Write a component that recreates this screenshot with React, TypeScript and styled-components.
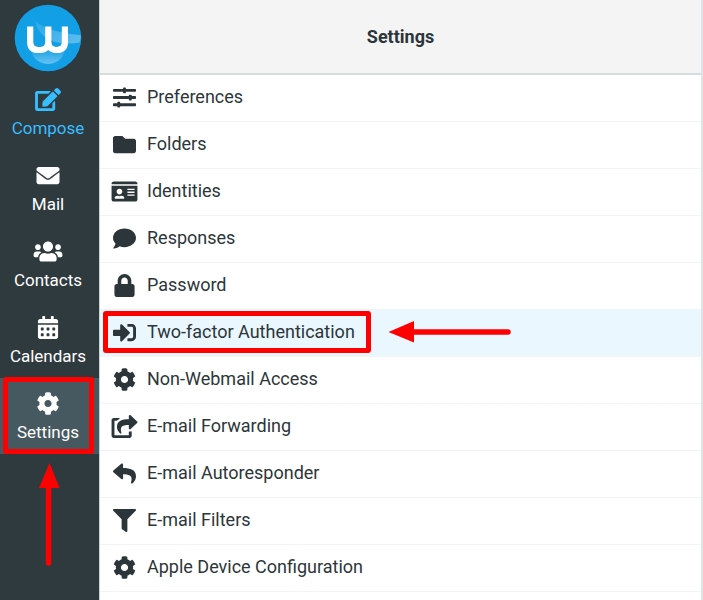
import React from "react";
import styled, { createGlobalStyle, css } from "styled-components";
import type { IconType } from "react-icons";
import {
  FaCalendarAlt,
  FaCog,
  FaComment,
  FaEdit,
  FaEnvelope,
  FaFilter,
  FaFolder,
  FaIdCard,
  FaLock,
  FaReply,
  FaShareSquare,
  FaSignInAlt,
  FaSlidersH,
  FaUsers,
} from "react-icons/fa";

const GlobalStyle = createGlobalStyle`
  *, *::before, *::after { box-sizing: border-box; }
  body {
    margin: 0;
    overflow: hidden;
    background: #fff;
    color: #2c363a;
    font-family: Roboto, "Liberation Sans", sans-serif;
    font-size: 18px;
  }
`;

const Page = styled.div`
  display: flex;
  min-height: 100vh;
`;

const Sidebar = styled.aside`
  flex: none;
  width: 100px;
  background: #2f3a3f;
  border-right: 1px solid #c9d2d6;
`;

const Brand = styled.div`
  display: flex;
  justify-content: center;
  height: 74px;
  padding: 4px 3px 0 0;
`;

const TaskMenu = styled.nav`
  display: flex;
  flex-direction: column;
`;

const TaskButton = styled.button<{ $accent?: boolean; $active?: boolean }>`
  position: relative;
  display: flex;
  flex-direction: column;
  align-items: center;
  gap: 7px;
  height: 76px;
  padding: 14px 3px 0 0;
  border: 0;
  background: ${(p) => (p.$active ? "#475960" : "transparent")};
  color: ${(p) => (p.$accent ? "#37beff" : "#fff")};
  font: inherit;
  font-size: 17px;
  line-height: 20px;
  cursor: pointer;

  > svg:first-child {
    flex: none;
    width: 30px;
    height: 23px;
  }
`;

const Main = styled.main`
  flex: 1;
  min-width: 0;
  border-right: 2px solid #dfe4e7;
`;

const Header = styled.header`
  display: flex;
  align-items: center;
  justify-content: center;
  height: 75px;
  background: #f4f4f4;
  border-bottom: 2px solid #d6dde0;
`;

const Title = styled.h1`
  margin: 0;
  font-size: 18px;
  line-height: 24px;
  font-weight: 700;
`;

const OptionList = styled.ul`
  margin: 0;
  padding: 0;
  list-style: none;
`;

const OptionRow = styled.li<{ $hover?: boolean }>`
  position: relative;
  display: flex;
  height: 47px;
  border-bottom: 1px solid #f1f3f4;
  background: ${(p) => (p.$hover ? "#eaf7fe" : "#fff")};
`;

const OptionLink = styled.a`
  flex: 1;
  display: flex;
  align-items: center;
  padding: 0 0 2px 11px;
  color: inherit;
  line-height: 24px;
  text-decoration: none;
`;

const OptionContent = styled.span`
  position: relative;
  display: flex;
  align-items: center;
  gap: 9px;

  svg {
    flex: none;
    width: 27px;
    height: 23px;
  }
`;

const marker = css`
  position: absolute;
  border: 5px solid #f00;
  border-radius: 3px;
  pointer-events: none;
`;

const TaskMarker = styled.span`
  ${marker}
  inset: -1px 5px 0 3px;
`;

const OptionMarker = styled.span`
  ${marker}
  inset: -9px -16px -9px -8px;
`;

const UpArrow = styled.svg`
  position: absolute;
  top: 85px;
  left: 38px;
  pointer-events: none;
`;

const LeftArrow = styled.svg`
  position: absolute;
  top: 11px;
  left: 288px;
  pointer-events: none;
`;

const Logo = () => (
  <svg width="68" height="68" viewBox="0 0 68 68" role="img" aria-label="Webmail">
    <defs>
      <linearGradient id="shine" x1="0" y1="0" x2="1" y2="1">
        <stop offset="0" stopColor="#fff" stopOpacity="0.1" />
        <stop offset="1" stopColor="#fff" stopOpacity="0.32" />
      </linearGradient>
      <linearGradient id="pool" x1="0" y1="0" x2="0" y2="1">
        <stop offset="0" stopColor="#fff" stopOpacity="0.05" />
        <stop offset="1" stopColor="#fff" stopOpacity="0.36" />
      </linearGradient>
    </defs>
    <circle cx="34" cy="34" r="33.3" fill="#129fe6" />
    <path d="M21 17C30 25 50 30 66.800 31c0 3-.4 5-1.300 7.500C45 42 25 36 21 17Z" fill="url(#shine)" />
    <path d="M17 46h34c-2 9-9 14-17 14s-15-5-17-14Z" fill="url(#pool)" />
    <path
      d="M16.200 22.500v15.500c0 5.500 3 8 8 8h2c5 0 8.100-3 8.100-8V22.500M34.300 38c0 5 3 8 8 8 6 0 8.600-3 8.600-8V22.500"
      fill="none"
      stroke="#fff"
      strokeWidth="6.2"
    />
  </svg>
);

interface Item {
  label: string;
  icon: IconType;
}

const tasks: (Item & { accent?: boolean; active?: boolean })[] = [
  { label: "Compose", icon: FaEdit, accent: true },
  { label: "Mail", icon: FaEnvelope },
  { label: "Contacts", icon: FaUsers },
  { label: "Calendars", icon: FaCalendarAlt },
  { label: "Settings", icon: FaCog, active: true },
];

const options: (Item & { hover?: boolean })[] = [
  { label: "Preferences", icon: FaSlidersH },
  { label: "Folders", icon: FaFolder },
  { label: "Identities", icon: FaIdCard },
  { label: "Responses", icon: FaComment },
  { label: "Password", icon: FaLock },
  { label: "Two-factor Authentication", icon: FaSignInAlt, hover: true },
  { label: "Non-Webmail Access", icon: FaCog },
  { label: "E-mail Forwarding", icon: FaShareSquare },
  { label: "E-mail Autoresponder", icon: FaReply },
  { label: "E-mail Filters", icon: FaFilter },
  { label: "Apple Device Configuration", icon: FaCog },
];

export default function App() {
  return (
    <>
      <GlobalStyle />
      <Page>
        <Sidebar>
          <Brand>
            <Logo />
          </Brand>
          <TaskMenu aria-label="Tasks">
            {tasks.map(({ label, icon: Icon, accent, active }) => (
              <TaskButton key={label} type="button" $accent={accent} $active={active}>
                <Icon aria-hidden />
                {label}
                {active && (
                  <>
                    <TaskMarker />
                    <UpArrow width="24" height="104" viewBox="0 0 24 104" aria-hidden>
                      <path d="M10.500 20V100" stroke="#f00" strokeWidth="5.500" strokeLinecap="round" />
                      <path d="M11.500 0 21.500 25H1Z" fill="#f00" />
                    </UpArrow>
                  </>
                )}
              </TaskButton>
            ))}
          </TaskMenu>
        </Sidebar>
        <Main>
          <Header>
            <Title>Settings</Title>
          </Header>
          <OptionList>
            {options.map(({ label, icon: Icon, hover }) => (
              <OptionRow key={label} $hover={hover}>
                <OptionLink href="#">
                  <OptionContent>
                    <Icon aria-hidden />
                    {label}
                    {hover && <OptionMarker />}
                  </OptionContent>
                </OptionLink>
                {hover && (
                  <LeftArrow width="124" height="24" viewBox="0 0 124 24" aria-hidden>
                    <path d="M22 11H120" stroke="#f00" strokeWidth="5.500" strokeLinecap="round" />
                    <path d="M.5 11 26 0V21.500Z" fill="#f00" />
                  </LeftArrow>
                )}
              </OptionRow>
            ))}
          </OptionList>
        </Main>
      </Page>
    </>
  );
}
